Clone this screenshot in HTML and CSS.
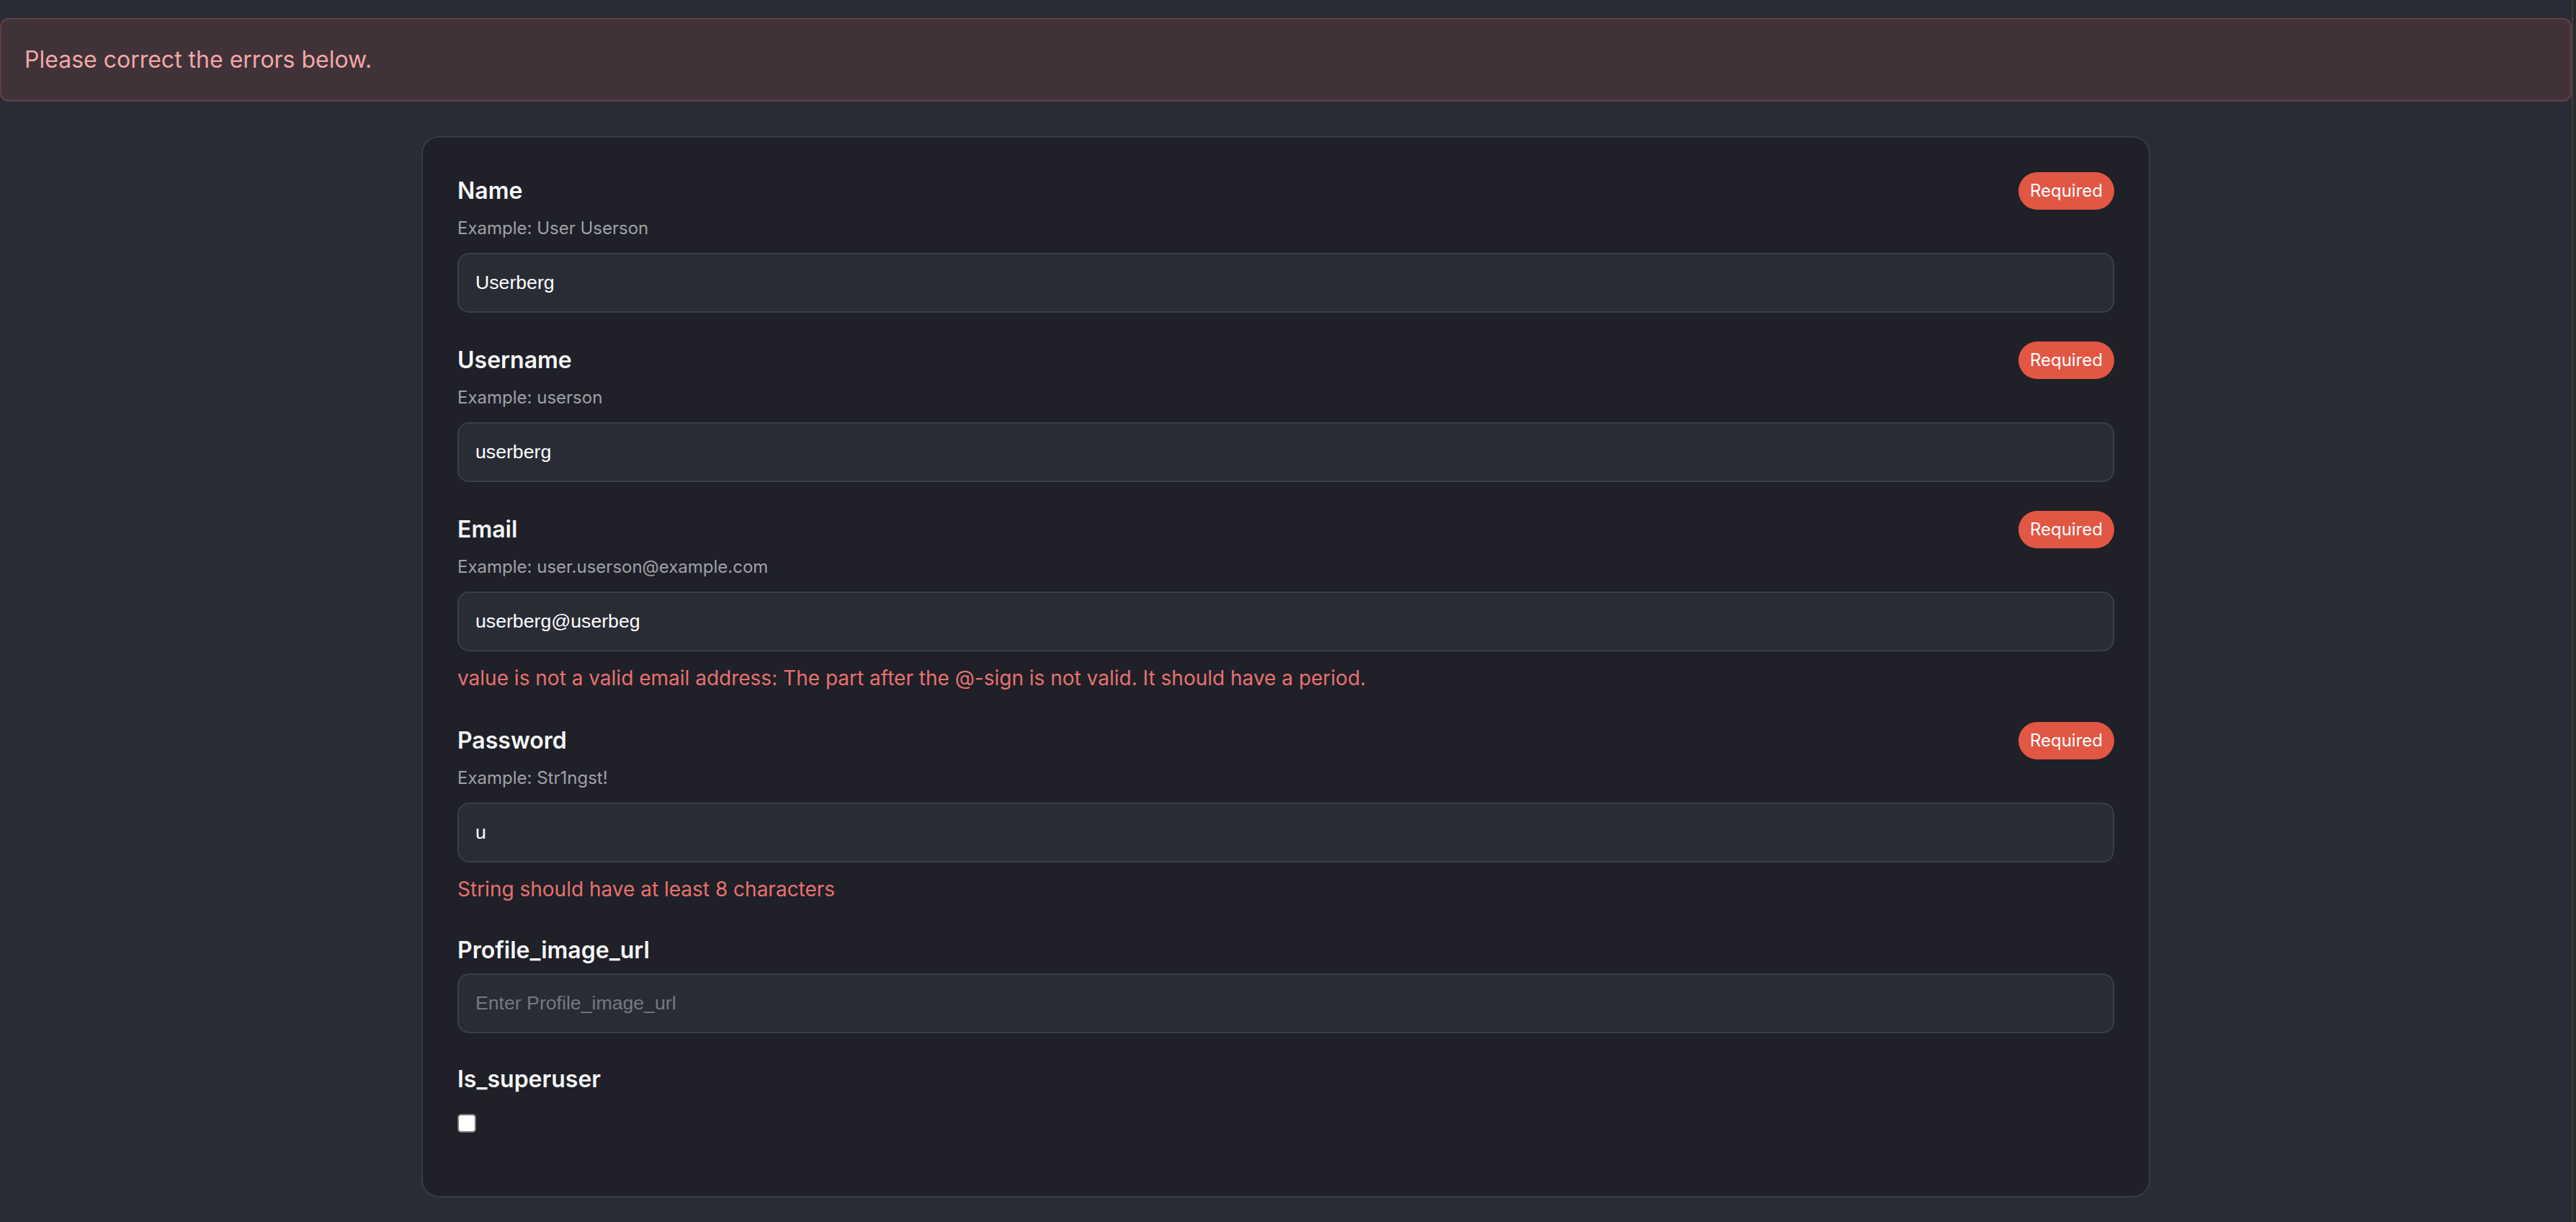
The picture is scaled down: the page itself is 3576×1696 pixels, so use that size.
FILE: index.html
```html
<!DOCTYPE html>
<html>

<head>
    <meta charset="UTF-8">
    <meta name="viewport" content="width=device-width, initial-scale=1.0">
    <title>Create User</title>
    <link rel="stylesheet" href="styles.css">
</head>

<body>
    <div class="alert">Please correct the errors below.</div>

    <form class="card">
        <div class="field">
            <div class="fieldHead">
                <label class="fieldLabel" for="name">Name</label>
                <span class="badge">Required</span>
            </div>
            <p class="fieldHint">Example: User Userson</p>
            <input class="fieldInput" id="name" type="text" value="Userberg">
        </div>

        <div class="field">
            <div class="fieldHead">
                <label class="fieldLabel" for="username">Username</label>
                <span class="badge">Required</span>
            </div>
            <p class="fieldHint">Example: userson</p>
            <input class="fieldInput" id="username" type="text" value="userberg">
        </div>

        <div class="field">
            <div class="fieldHead">
                <label class="fieldLabel" for="email">Email</label>
                <span class="badge">Required</span>
            </div>
            <p class="fieldHint">Example: user.userson@example.com</p>
            <input class="fieldInput" id="email" type="text" value="userberg@userbeg">
            <p class="fieldError">value is not a valid email address: The part after the @-sign is not valid. It should have a period.</p>
        </div>

        <div class="field">
            <div class="fieldHead">
                <label class="fieldLabel" for="password">Password</label>
                <span class="badge">Required</span>
            </div>
            <p class="fieldHint">Example: Str1ngst!</p>
            <input class="fieldInput" id="password" type="text" value="u">
            <p class="fieldError">String should have at least 8 characters</p>
        </div>

        <div class="field">
            <div class="fieldHead">
                <label class="fieldLabel" for="profile_image_url">Profile_image_url</label>
            </div>
            <input class="fieldInput" id="profile_image_url" type="text" placeholder="Enter Profile_image_url">
        </div>

        <div class="field">
            <div class="fieldHead">
                <label class="fieldLabel" for="is_superuser">Is_superuser</label>
            </div>
            <input class="fieldCheck" id="is_superuser" type="checkbox">
        </div>
    </form>
</body>

</html>
```

FILE: styles.css
```css
html {
    background-color: #2b2b2d;
}

body {
    margin: 0 4px 0 0;
    min-height: 100vh;
    background-color: #292c34;
    border-right: 2px solid #3d3d3f;
    font-family: Inter, 'Noto Sans', sans-serif;
    color: #f4f4f5;
    overflow: hidden;
}

.alert {
    margin-top: 25px;
    padding: 32px;
    font-size: 32px;
    line-height: 48px;
    color: #f4a6a6;
    background-color: #3f3339;
    border: 2px solid #643f43;
    border-radius: 12px;
}

.card {
    box-sizing: border-box;
    width: 2400px;
    margin: 48px auto 0;
    padding: 48px;
    background-color: #1f2028;
    border: 2px solid #383b45;
    border-radius: 24px;
}

.field {
    margin-bottom: 40px;
}

.fieldHead {
    display: flex;
    justify-content: space-between;
    align-items: center;
    margin-bottom: 8px;
}

.fieldLabel {
    font-size: 32px;
    line-height: 48px;
    font-weight: 600;
    color: #f7f7f8;
}

.badge {
    padding: 8px 16px;
    font-size: 24px;
    line-height: 36px;
    font-weight: 400;
    color: #ffffff;
    background-color: #e25644;
    border-radius: 26px;
}

.fieldHint {
    margin: 0 0 16px;
    font-size: 24px;
    line-height: 36px;
    color: #a0a1a6;
}

.fieldInput {
    display: block;
    box-sizing: border-box;
    width: 100%;
    margin: 0;
    padding: 24px 23px;
    font-family: 'Liberation Sans', Arial, sans-serif;
    font-size: 26.67px;
    color: #ffffff;
    background-color: #2a2c35;
    border: 2px solid #3b3e49;
    border-radius: 16px;
    outline: none;
}

.fieldInput::placeholder {
    color: #77787e;
}

.fieldError {
    margin: 16px 0 0;
    font-size: 28px;
    line-height: 42px;
    color: #e8716f;
}

/* margins collapse with the head's 8px, so this gives 24px */
.fieldCheck {
    display: block;
    -webkit-appearance: none;
    appearance: none;
    width: 26px;
    height: 26px;
    margin: 24px 0 0;
    background-color: #ffffff;
    border: 2px solid #767676;
    border-radius: 5px;
}
```
